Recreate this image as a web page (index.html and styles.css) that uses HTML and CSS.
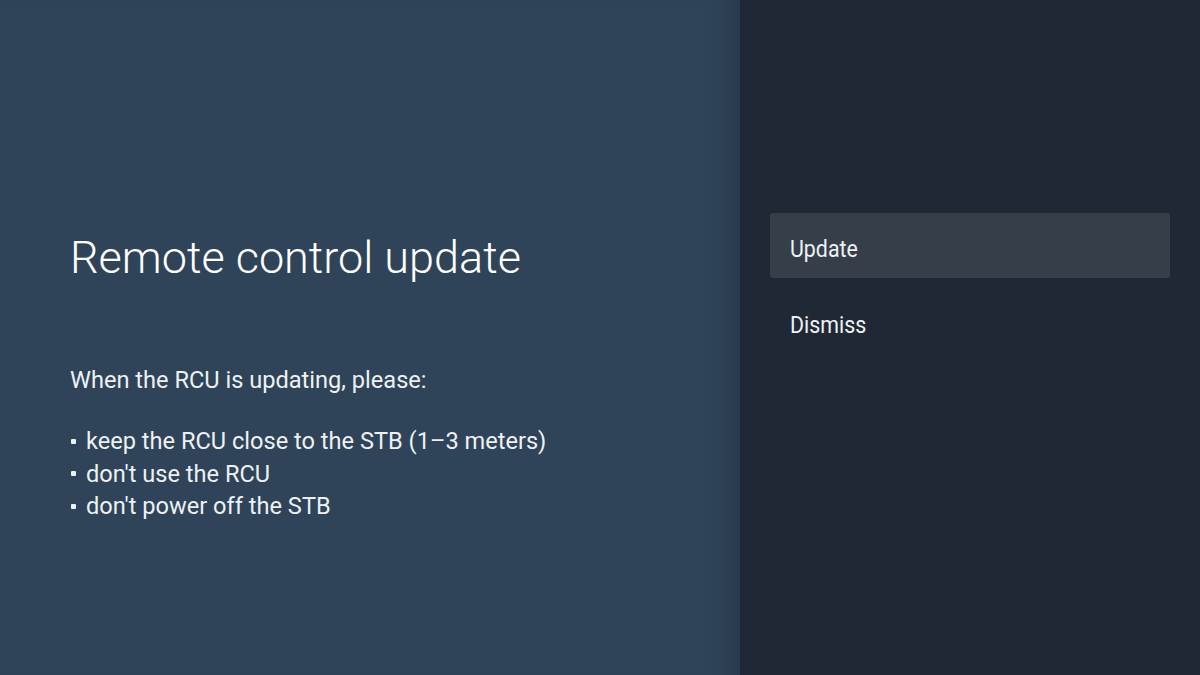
FILE: index.html
```html
<!DOCTYPE html>
<html lang="en">
<head>
    <meta charset="UTF-8">
    <title>Remote control update</title>
    <link rel="stylesheet" href="styles.css">
</head>
<body>
    <div class="screen">
        <div class="info-panel">
            <h1 class="title">Remote control update</h1>
            <p class="intro">When the RCU is updating, please:</p>
            <ul class="tips">
                <li>keep the RCU close to the STB (1–3 meters)</li>
                <li>don't use the RCU</li>
                <li>don't power off the STB</li>
            </ul>
        </div>
        <div class="actions-panel">
            <div class="action selected"><span class="label">Update</span></div>
            <div class="action"><span class="label">Dismiss</span></div>
        </div>
    </div>
</body>
</html>
```

FILE: styles.css
```css
* {
    margin: 0;
    padding: 0;
    box-sizing: border-box;
}

body {
    width: 1200px;
    height: 675px;
    overflow: hidden;
    font-family: Roboto, "Liberation Sans", sans-serif;
    color: #eef1f4;
}

.screen {
    display: flex;
    height: 100%;
}

.info-panel {
    width: 740px;
    background-color: #2f4458;
    padding: 228px 40px 0 70px;
    box-shadow: inset -30px 0 30px -28px rgba(0, 0, 0, 0.25);
}

.title {
    font-weight: 300;
    font-size: 45px;
    line-height: 60px;
    color: #ffffff;
}

.intro {
    margin-top: 76px;
    font-size: 23.6px;
    line-height: 32px;
}

.tips {
    list-style: none;
    margin-top: 29px;
    font-size: 23.6px;
    line-height: 32.5px;
}

.tips li {
    display: flex;
    align-items: center;
}

.tips li::before {
    content: "";
    width: 5px;
    height: 5px;
    border-radius: 1px;
    background-color: #eef1f4;
    margin: 0 10px 0 1px;
}

.actions-panel {
    flex: 1;
    background-color: #1f2935;
    padding: 213px 30px 0 30px;
    display: flex;
    flex-direction: column;
    gap: 11px;
}

.action {
    height: 65px;
    padding: 6px 20px 0;
    display: flex;
    align-items: center;
    border-radius: 3px;
    font-size: 24px;
}

.action .label {
    display: inline-block;
    transform: scaleX(0.89);
    transform-origin: left center;
}

.action.selected {
    background-color: #343f4a;
}
```
